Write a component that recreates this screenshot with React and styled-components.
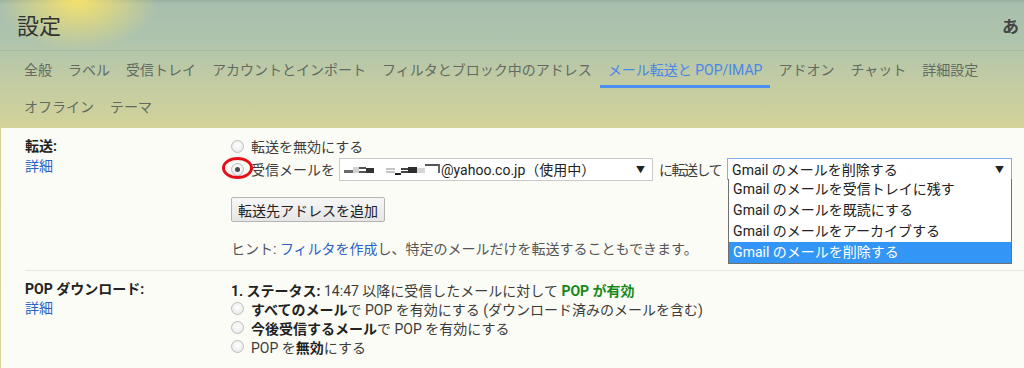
import React from 'react';
import styled, { createGlobalStyle } from 'styled-components';

const GlobalStyle = createGlobalStyle`
  html, body { margin: 0; padding: 0; }
  body {
    font-family: Roboto, "Noto Sans CJK JP", sans-serif;
    width: 1024px;
    height: 368px;
    overflow: hidden;
  }
`;

const Page = styled.div`
  width: 1024px;
  height: 368px;
  overflow: hidden;
  display: flex;
  flex-direction: column;
  background:
    radial-gradient(ellipse 80px 50px at 78px 0px, rgba(250, 228, 105, 0.95), rgba(250, 228, 105, 0) 100%),
    linear-gradient(180deg, #98ae9f 0px, #a8bfae 4px, #afc4ad 40px, #c4cca2 85px, #d3d39a 128px, #d9d69c 368px);
`;

const Header = styled.div`
  height: 50px;
  flex: none;
  display: flex;
  align-items: center;
  justify-content: space-between;
  padding: 0 0 0 17px;
  border-bottom: 1px solid rgba(0, 0, 0, 0.07);
`;

const Title = styled.h1`
  margin: -2px 0 0;
  font-size: 22px;
  font-weight: 400;
  color: #333;
  font-family: "Noto Sans CJK JP", sans-serif;
`;

const Account = styled.span`
  font-size: 17px;
  font-weight: 700;
  color: #444;
  margin-right: 5px;
  font-family: "Noto Sans CJK JP", sans-serif;
`;

const Tabs = styled.nav`
  display: flex;
  flex-wrap: wrap;
  width: 990px;
  padding-left: 16px;
  box-sizing: border-box;
  flex: none;
`;

const Tab = styled.a`
  height: 37px;
  box-sizing: border-box;
  padding: 4px 8px 0;
  line-height: 30px;
  font-size: 14px;
  white-space: nowrap;
  color: ${p => (p.$active ? '#4a86e8' : '#626a62')};
  border-bottom: 3px solid ${p => (p.$active ? '#4d8ff0' : 'transparent')};
`;

const Panel = styled.main`
  flex: 1;
  margin: 3px 0 0 1px;
  background: rgba(253, 253, 250, 0.96);
  padding-left: 24px;
  font-size: 14px;
  color: #3c3c3c;
`;

const Section = styled.section`
  display: grid;
  grid-template-columns: 206px 1fr;
  padding: ${p => p.$pad};
  border-top: ${p => (p.$divider ? '1px solid #e6e6e2' : 'none')};
`;

const Label = styled.div`
  display: flex;
  flex-direction: column;
`;

const LabelTitle = styled.span`
  font-weight: 700;
  color: #222;
  line-height: ${p => p.$lh}px;
`;

const Link = styled.a`
  color: #2a62c9;
  line-height: 18px;
`;

const Body = styled.div`
  display: flex;
  flex-direction: column;
  align-items: flex-start;
`;

const Row = styled.div`
  display: flex;
  align-items: center;
  height: ${p => p.$h}px;
  white-space: nowrap;
`;

const RadioWrap = styled.span`
  position: relative;
  display: inline-flex;
  margin-right: 7px;
`;

const Radio = styled.span`
  width: 13px;
  height: 13px;
  box-sizing: border-box;
  border-radius: 50%;
  border: 1px solid #bdbdbd;
  background: radial-gradient(circle at 50% 40%, #ffffff 0%, #ececec 70%, #dcdcdc 100%);
  display: inline-flex;
  align-items: center;
  justify-content: center;

  &::after {
    content: '';
    width: 5px;
    height: 5px;
    border-radius: 50%;
    background: ${p => (p.$checked ? '#4a4a4a' : 'transparent')};
  }
`;

const Annotation = styled.span`
  position: absolute;
  left: -9px;
  top: -6px;
  width: 31px;
  height: 22px;
  box-sizing: border-box;
  border: 3px solid #e3101a;
  border-radius: 50%;
`;

const Select = styled.div`
  position: relative;
  width: ${p => p.$w}px;
  height: ${p => p.$h}px;
  margin-left: ${p => p.$ml || 0}px;
  box-sizing: border-box;
  border: 1px solid ${p => (p.$focus ? '#86adee' : '#c9c9c9')};
  background: #fff;
  display: flex;
  align-items: center;
  padding: 0 7px 0 4px;
  color: #222;
`;

const SelectText = styled.span`
  flex: 1;
  display: flex;
  align-items: center;
`;

const Arrow = styled.span`
  font-size: 9px;
  color: #222;
`;

const Dropdown = styled.ul`
  position: absolute;
  top: 100%;
  left: 0;
  width: 284px;
  margin: 0;
  padding: 0;
  list-style: none;
  box-sizing: border-box;
  background: #fff;
  border: 1px solid #6f6f6f;
  border-top: none;
  z-index: 2;
`;

const Option = styled.li`
  height: 21px;
  line-height: 21px;
  padding: 0 4px;
  color: ${p => (p.$selected ? '#fff' : '#222')};
  background: ${p => (p.$selected ? '#3396f6' : 'transparent')};
`;

const Then = styled.span`
  margin: 0 6px;
  letter-spacing: -1.5px;
`;

const Button = styled.button`
  margin-top: 16px;
  height: 25px;
  padding: 0 6px;
  font: inherit;
  font-size: 14px;
  color: #222;
  border: 1px solid #b4b4b4;
  border-radius: 2px;
  background: linear-gradient(180deg, #f7f7f7, #e6e6e6);
`;

const Hint = styled.div`
  margin-top: 18px;
  line-height: 19px;
  color: #555;
`;

const Strong = styled.b`
  font-weight: 700;
  color: #222;
`;

const Green = styled.b`
  font-weight: 700;
  color: #17891a;
`;

const Redacted = () => (
  <svg width="97" height="14" viewBox="0 0 97 14">
    <rect x="0" y="8" width="9" height="3" fill="#6a6a6a" />
    <rect x="9" y="5" width="6" height="6" fill="#d2d2d2" />
    <rect x="15" y="5" width="7" height="2" fill="#555" />
    <rect x="15" y="9" width="7" height="2" fill="#555" />
    <rect x="22" y="6" width="8" height="5" fill="#333" />
    <rect x="42" y="6" width="9" height="2" fill="#c4c4c4" />
    <rect x="42" y="9" width="9" height="2" fill="#c4c4c4" />
    <rect x="51" y="11" width="6" height="2" fill="#222" />
    <rect x="57" y="6" width="7" height="2" fill="#444" />
    <rect x="57" y="9" width="7" height="2" fill="#444" />
    <rect x="64" y="5" width="9" height="6" fill="#2e2e2e" />
    <rect x="73" y="6" width="8" height="5" fill="#d6d6d6" />
    <rect x="81" y="2" width="14" height="2" fill="#555" />
    <rect x="94" y="2" width="2" height="9" fill="#666" />
  </svg>
);

const tabs = [
  '全般', 'ラベル', '受信トレイ', 'アカウントとインポート', 'フィルタとブロック中のアドレス',
  'メール転送と POP/IMAP', 'アドオン', 'チャット', '詳細設定', 'オフライン', 'テーマ',
];

const actions = [
  'Gmail のメールを受信トレイに残す',
  'Gmail のメールを既読にする',
  'Gmail のメールをアーカイブする',
  'Gmail のメールを削除する',
];

export default function App() {
  return (
    <Page>
      <GlobalStyle />
      <Header>
        <Title>設定</Title>
        <Account>あ</Account>
      </Header>
      <Tabs>
        {tabs.map(t => (
          <Tab key={t} $active={t === 'メール転送と POP/IMAP'}>{t}</Tab>
        ))}
      </Tabs>
      <Panel>
        <Section $pad="7px 0 11px">
          <Label>
            <LabelTitle $lh={22}>転送:</LabelTitle>
            <Link>詳細</Link>
          </Label>
          <Body>
            <Row $h={22}>
              <RadioWrap><Radio /></RadioWrap>
              転送を無効にする
            </Row>
            <Row $h={24}>
              <RadioWrap>
                <Radio $checked />
                <Annotation />
              </RadioWrap>
              受信メールを
              <Select $w={314} $h={23} $ml={4}>
                <SelectText>
                  <Redacted />
                  @yahoo.co.jp（使用中）
                </SelectText>
                <Arrow>▼</Arrow>
              </Select>
              <Then>に転送して</Then>
              <Select $w={285} $h={22} $focus>
                <SelectText>Gmail のメールを削除する</SelectText>
                <Arrow>▼</Arrow>
                <Dropdown>
                  {actions.map((a, i) => (
                    <Option key={a} $selected={i === actions.length - 1}>{a}</Option>
                  ))}
                </Dropdown>
              </Select>
            </Row>
            <Button>転送先アドレスを追加</Button>
            <Hint>
              ヒント: <Link>フィルタを作成</Link>し、特定のメールだけを転送することもできます。
            </Hint>
          </Body>
        </Section>
        <Section $pad="9px 0 0" $divider>
          <Label>
            <LabelTitle $lh={19}>POP ダウンロード:</LabelTitle>
            <Link>詳細</Link>
          </Label>
          <Body>
            <Row $h={19}>
              <Strong>1. ステータス:</Strong>&nbsp;14:47 以降に受信したメールに対して&nbsp;<Green>POP が有効</Green>
            </Row>
            <Row $h={19}>
              <RadioWrap><Radio /></RadioWrap>
              <Strong>すべてのメール</Strong>で POP を有効にする (ダウンロード済みのメールを含む)
            </Row>
            <Row $h={19}>
              <RadioWrap><Radio /></RadioWrap>
              <Strong>今後受信するメール</Strong>で POP を有効にする
            </Row>
            <Row $h={19}>
              <RadioWrap><Radio /></RadioWrap>
              POP を<Strong>無効</Strong>にする
            </Row>
          </Body>
        </Section>
      </Panel>
    </Page>
  );
}
